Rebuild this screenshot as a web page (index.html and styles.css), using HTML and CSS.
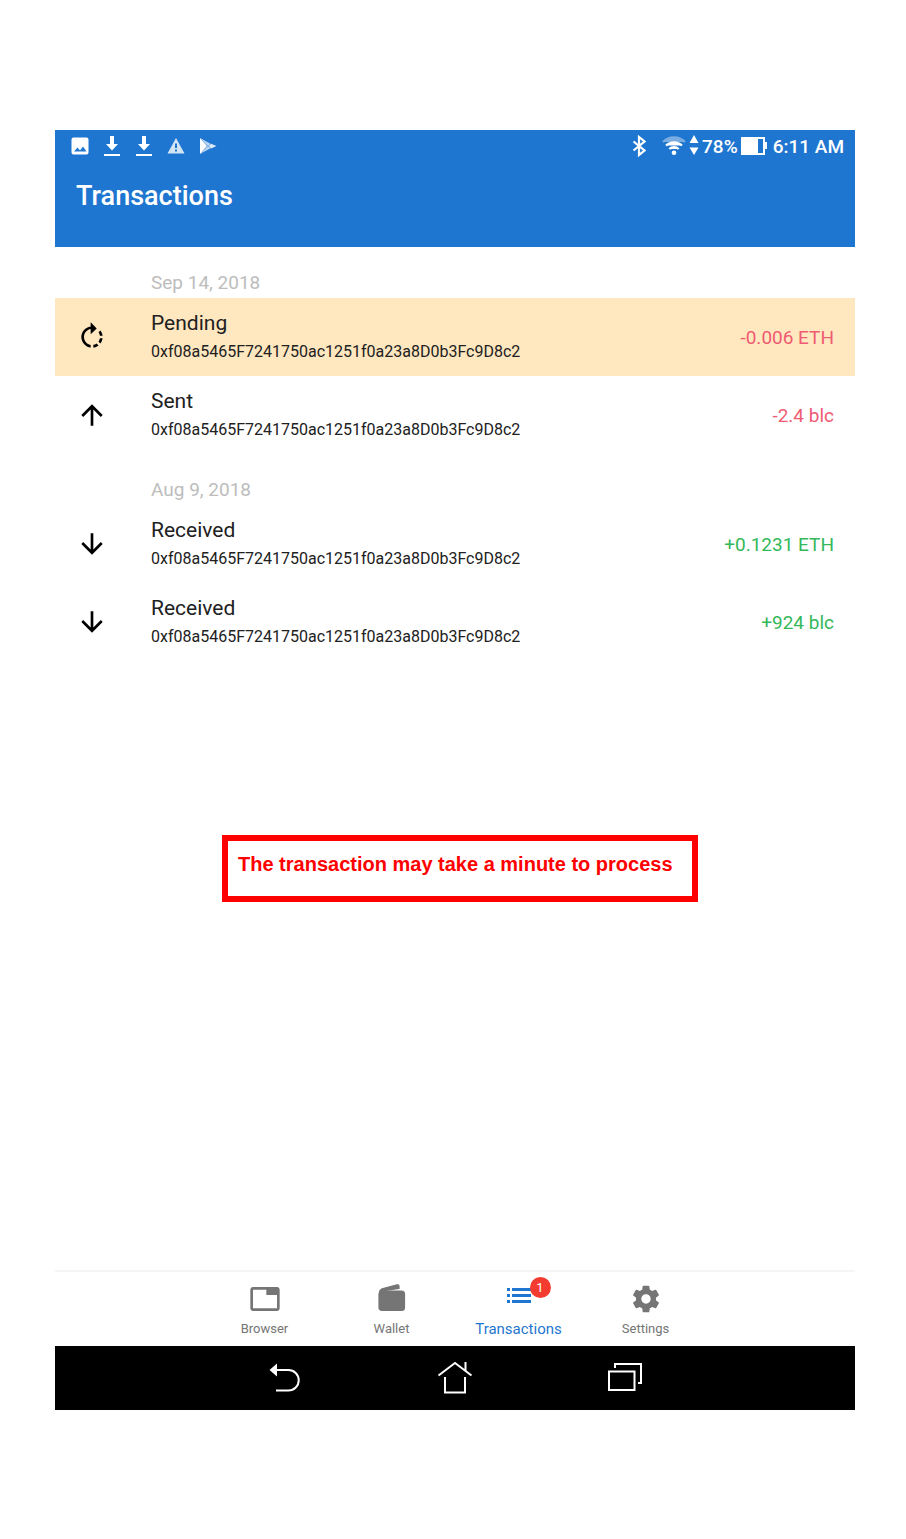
FILE: index.html
```html
<!DOCTYPE html>
<html lang="en">
<head>
<meta charset="utf-8">
<meta name="viewport" content="width=device-width, initial-scale=1">
<title>Transactions</title>
<link rel="stylesheet" href="styles.css">
</head>
<body>
<svg class="sprite" aria-hidden="true">
  <symbol id="up" viewBox="0 0 24 24"><path d="M4 12l1.41 1.41L11 7.83V20h2V7.83l5.58 5.59L20 12l-8-8-8 8z"/></symbol>
  <symbol id="down" viewBox="0 0 24 24"><path d="M20 12l-1.41-1.41L13 16.17V4h-2v12.17l-5.58-5.59L4 12l8 8 8-8z"/></symbol>
  <symbol id="download" viewBox="0 0 18 22"><path d="M7 1h4v8h4l-6 6.500L3 9h4zM1 19h16v2H1z"/></symbol>
</svg>
<div class="device">
  <header class="top">
    <div class="status">
      <div class="notices">
        <svg width="18" height="22" viewBox="0 0 18 22"><path fill-rule="evenodd" d="M2.500 2.500h13a2 2 0 0 1 2 2v13a2 2 0 0 1-2 2h-13a2 2 0 0 1-2-2v-13a2 2 0 0 1 2-2zM3 16.500h12.500l-3.500-5-3 4-2.500-3z"/></svg>
        <svg width="18" height="22"><use href="#download"/></svg>
        <svg width="18" height="22"><use href="#download"/></svg>
        <svg width="18" height="22" viewBox="0 0 18 22" opacity=".8"><path fill-rule="evenodd" d="M9 3l8.500 15.500H.5zM8 8.500v4.500h2V8.500zm0 6v2h2v-2z"/></svg>
        <svg width="18" height="22" viewBox="0 0 18 22"><path d="M1 3l7 8-7 8z"/><path d="M1 3l10.500 5.800L9 11.200zM1 19l10.500-5.800L9 10.800z" opacity=".7"/><path d="M12 8.800l5.500 2.200-5.500 2.400L9.800 11z" opacity=".85"/></svg>
      </div>
      <div class="system">
        <svg class="bluetooth" width="14" height="22" viewBox="0 0 14 22"><path d="M1.500 6.500l11 9L7 20V2l5.500 4.500-11 9" fill="none" stroke="#fff" stroke-width="2.200"/></svg>
        <svg width="24" height="22" viewBox="0 0 24 22" fill="none" stroke="#fff" stroke-width="2.200"><path d="M1 7a15.500 15.500 0 0 1 22 0" opacity=".4"/><path d="M4 10.500a11.500 11.500 0 0 1 16 0M7.300 14a7 7 0 0 1 9.400 0"/><circle cx="12" cy="17.800" r="2.300" fill="#fff" stroke="none"/></svg>
        <svg class="traffic" width="10" height="22" viewBox="0 0 10 22"><path d="M5 0l4.500 8h-9zM.5 12.500h9L5 20z"/></svg>
        <span>78%</span>
        <svg class="battery" width="26" height="22" viewBox="0 0 26 22"><path fill-rule="evenodd" d="M0 2h24v5h2v7h-2v6H0zM17 4v14h5V4z"/></svg>
        <time>6:11 AM</time>
      </div>
    </div>
    <h1>Transactions</h1>
  </header>

  <main>
    <section>
      <h2>Sep 14, 2018</h2>
      <ul>
        <li class="row pending">
          <svg class="mark" viewBox="0 0 24 24"><path d="M15.550 5.550L11 1v3.070C7.060 4.560 4 7.920 4 12s3.050 7.440 7 7.930v-2.020c-2.840-.48-5-2.940-5-5.910s2.160-5.430 5-5.910V10l4.550-4.450zM19.930 11c-.17-1.390-.72-2.730-1.620-3.890l-1.420 1.420c.54.750.88 1.600 1.020 2.470h2.020zM13 17.900v2.020c1.390-.17 2.740-.71 3.900-1.610l-1.440-1.440c-.75.540-1.590.890-2.460 1.030zm3.890-2.420l1.420 1.410c.9-1.160 1.450-2.500 1.620-3.890h-2.020c-.14.870-.48 1.720-1.020 2.480z"/></svg>
          <div class="info"><h3>Pending</h3><p>0xf08a5465F7241750ac1251f0a23a8D0b3Fc9D8c2</p></div>
          <span class="amount out">-0.006 ETH</span>
        </li>
        <li class="row">
          <svg class="mark"><use href="#up"/></svg>
          <div class="info"><h3>Sent</h3><p>0xf08a5465F7241750ac1251f0a23a8D0b3Fc9D8c2</p></div>
          <span class="amount out">-2.4 blc</span>
        </li>
      </ul>
    </section>
    <section>
      <h2>Aug 9, 2018</h2>
      <ul>
        <li class="row">
          <svg class="mark"><use href="#down"/></svg>
          <div class="info"><h3>Received</h3><p>0xf08a5465F7241750ac1251f0a23a8D0b3Fc9D8c2</p></div>
          <span class="amount in">+0.1231 ETH</span>
        </li>
        <li class="row">
          <svg class="mark"><use href="#down"/></svg>
          <div class="info"><h3>Received</h3><p>0xf08a5465F7241750ac1251f0a23a8D0b3Fc9D8c2</p></div>
          <span class="amount in">+924 blc</span>
        </li>
      </ul>
    </section>
    <p class="note">The transaction may take a minute to process</p>
  </main>

  <nav class="tabs">
    <a href="#browser">
      <svg width="32" height="32" viewBox="0 0 24 24"><path d="M21 3H3c-1.100 0-2 .9-2 2v14c0 1.100.9 2 2 2h18c1.100 0 2-.9 2-2V5c0-1.100-.9-2-2-2zm0 16H3V5h10v4h8v10z"/></svg>
      Browser
    </a>
    <a href="#wallet">
      <svg width="32" height="32" viewBox="0 0 32 32" fill="none" stroke="currentColor" stroke-width="1.200"><rect x="3" y="8" width="25.500" height="19.500" rx="3"/><path d="M3.500 9C4 6.500 5 6 7 5.500L21 1.800q2-.3 2 1.700V6M4.500 7L20 3"/><circle cx="24" cy="17.500" r="1.300" fill="currentColor" stroke="none"/></svg>
      Wallet
    </a>
    <a href="#transactions" class="active" aria-current="page">
      <span class="listing">
        <svg width="32" height="32" viewBox="0 0 32 32"><path d="M4 5h3v3H4zm5 0h19v3H9zM4 11h3v3H4zm5 0h19v3H9zM4 17h3v3H4zm5 0h19v3H9z"/></svg>
        <span class="badge">1</span>
      </span>
      Transactions
    </a>
    <a href="#settings">
      <svg width="32" height="32" viewBox="0 0 24 24"><path d="M19.430 12.980c.04-.32.070-.64.070-.98s-.03-.66-.07-.98l2.110-1.650c.19-.15.240-.42.120-.64l-2-3.460c-.12-.22-.39-.3-.61-.22l-2.490 1c-.52-.4-1.080-.73-1.690-.98l-.38-2.650C14.460 2.180 14.250 2 14 2h-4c-.25 0-.46.180-.49.420l-.38 2.650c-.61.250-1.170.590-1.690.98l-2.490-1c-.23-.09-.49 0-.61.220l-2 3.460c-.13.220-.07.490.12.640l2.110 1.650c-.04.320-.07.650-.07.980s.03.660.070.980l-2.110 1.650c-.19.150-.24.420-.12.640l2 3.460c.12.220.39.300.61.220l2.490-1c.52.400 1.080.730 1.690.98l.38 2.650c.03.240.24.420.49.420h4c.25 0 .46-.18.490-.42l.38-2.650c.61-.25 1.170-.59 1.690-.98l2.490 1c.23.090.49 0 .61-.22l2-3.460c.12-.22.070-.49-.12-.64l-2.110-1.650zM12 15.500c-1.930 0-3.500-1.570-3.500-3.500s1.570-3.500 3.500-3.500 3.500 1.570 3.500 3.500-1.570 3.500-3.500 3.500z"/></svg>
      Settings
    </a>
  </nav>

  <div class="keys">
    <button type="button" aria-label="Back"><svg width="36" height="36" viewBox="0 0 36 36"><path d="M9 10h12.500a10.200 10.200 0 0 1 0 20.500H9"/><path d="M2.500 10L10 3.500v13z" fill="#fff" stroke="none"/></svg></button>
    <button type="button" aria-label="Home"><svg width="36" height="36" viewBox="0 0 36 36"><path d="M1.500 15.500L18 3l16.500 12.500M28.500 2v9M8 17v15.500h20V17"/></svg></button>
    <button type="button" aria-label="Recent apps"><svg width="36" height="36" viewBox="0 0 36 36"><path d="M2 11.500h25.500V30H2zM8 8V4h26v19h-3"/></svg></button>
  </div>
</div>
</body>
</html>
```
FILE: styles.css
```css
* { box-sizing: border-box; }

body {
  display: flex;
  min-height: 100vh;
  margin: 0;
  padding: 130px 51px 129px 55px;
  background: #fff;
  color: #212121;
  font-family: Roboto, sans-serif;
}

h1, h2, h3, p, ul { margin: 0; padding: 0; font-weight: 400; }
ul { list-style: none; }
svg { display: block; flex: none; fill: currentColor; }
.sprite { position: absolute; width: 0; height: 0; }

.device { display: flex; flex: 1; flex-direction: column; min-width: 0; }

.top { background: #1f76d0; color: #fff; }
.status {
  display: flex;
  justify-content: space-between;
  height: 32px;
  padding: 0 11px 0 16px;
  font-size: 19px;
  font-weight: 500;
}
.notices, .system { display: flex; align-items: center; }
.notices { gap: 14px; }
.bluetooth { margin-right: 16px; }
.traffic { margin: 0 3px; }
.battery { margin: 0 6px 0 3px; }
.top h1 {
  padding: 24px 21px 41px;
  font-size: 27px;
  font-weight: 500;
  line-height: 20px;
}

main { flex: 1; }
section h2 {
  padding: 24px 96px 3px;
  color: #bdbdbd;
  font-size: 19px;
  line-height: 24px;
}
.row {
  display: flex;
  align-items: center;
  height: 78px;
  padding: 0 21px;
}
.pending { background: #ffe7bf; }
.mark { width: 32px; height: 32px; margin-right: 43px; color: #000; }
.info { flex: 1; }
.info h3 { font-size: 21px; line-height: 30px; }
.info p { font-size: 16px; line-height: 28px; }
.amount { font-size: 19px; }
.out { color: #ef5b72; }
.in { color: #33b85a; }

.note {
  width: fit-content;
  margin: 174px 0 0 167px;
  padding: 11px 19px 20px 10px;
  border: 6px solid #f00;
  color: #f00;
  font: bold 20px/24px "Liberation Sans", sans-serif;
}

.tabs {
  display: flex;
  justify-content: center;
  height: 76px;
  border-top: 2px solid #f5f5f5;
}
.tabs a {
  display: flex;
  flex: 0 1 127px;
  flex-direction: column;
  align-items: center;
  gap: 5px;
  padding-top: 11px;
  color: #757575;
  font-size: 13px;
  line-height: 18px;
  text-decoration: none;
}
.tabs .active { color: #1f76d0; font-size: 15px; }
.listing { position: relative; }
.badge {
  position: absolute;
  top: -6px;
  right: -16px;
  width: 21px;
  height: 21px;
  border-radius: 50%;
  background: #f43b30;
  color: #fff;
  font-size: 13px;
  line-height: 21px;
  text-align: center;
}

.keys { display: flex; justify-content: center; height: 64px; background: #000; }
.keys button {
  display: flex;
  flex: 0 1 170px;
  align-items: center;
  justify-content: center;
  padding: 0;
  border: 0;
  background: none;
}
.keys svg { fill: none; stroke: #fff; stroke-width: 2; }
```
